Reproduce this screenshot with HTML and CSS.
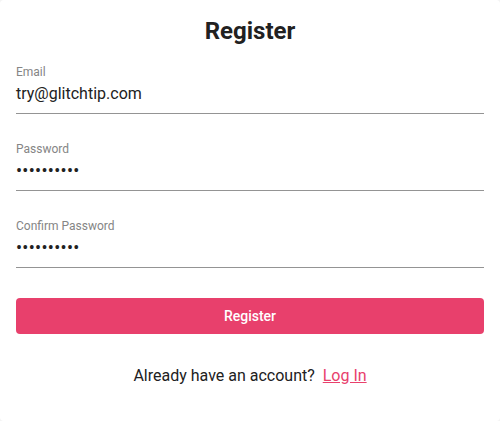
FILE: index.html
```html
<!DOCTYPE html>
<html lang="en">
<head>
<meta charset="utf-8">
<title>Register</title>
<link rel="stylesheet" href="styles.css">
</head>
<body>
<main class="card">
  <h1 class="title">Register</h1>
  <form class="form">
    <div class="field">
      <span class="field-label">Email</span>
      <span class="field-value">try@glitchtip.com</span>
    </div>
    <div class="field">
      <span class="field-label">Password</span>
      <span class="field-value dots">••••••••••</span>
    </div>
    <div class="field">
      <span class="field-label">Confirm Password</span>
      <span class="field-value dots">••••••••••</span>
    </div>
    <button class="submit" type="button">Register</button>
  </form>
  <p class="footer">Already have an account?&nbsp; <a class="link" href="#">Log In</a></p>
</main>
</body>
</html>
```
FILE: styles.css
```css
html, body {
  margin: 0;
  padding: 0;
  background: #f4f4f4;
}
body {
  font-family: Roboto, "Noto Sans", "Liberation Sans", sans-serif;
  color: #212121;
}
.card {
  box-sizing: border-box;
  width: 500px;
  height: 421px;
  background: #fff;
  border-radius: 4px;
  padding: 15px 16px 0;
  display: flex;
  flex-direction: column;
}
.title {
  margin: 0;
  font-size: 24px;
  line-height: 32px;
  font-weight: 700;
  text-align: center;
}
.form {
  display: flex;
  flex-direction: column;
  margin-top: 18px;
}
.field {
  display: flex;
  flex-direction: column;
  border-bottom: 1px solid #949494;
  margin-bottom: 28px;
}
.field-label {
  font-size: 12px;
  line-height: 14px;
  color: #858585;
}
.field-value {
  font-size: 16px;
  line-height: 22px;
  padding: 4px 0 8px;
}
.dots {
  font-size: 18px;
  letter-spacing: 0.3px;
}
.submit {
  margin-top: 2px;
  height: 36px;
  border: 0;
  border-radius: 4px;
  background: #e8406c;
  color: #fff;
  font-family: inherit;
  font-size: 14px;
  font-weight: 500;
}
.footer {
  margin: 31px 0 0;
  text-align: center;
  font-size: 16px;
  line-height: 22px;
}
.link {
  color: #e8406c;
}
```
